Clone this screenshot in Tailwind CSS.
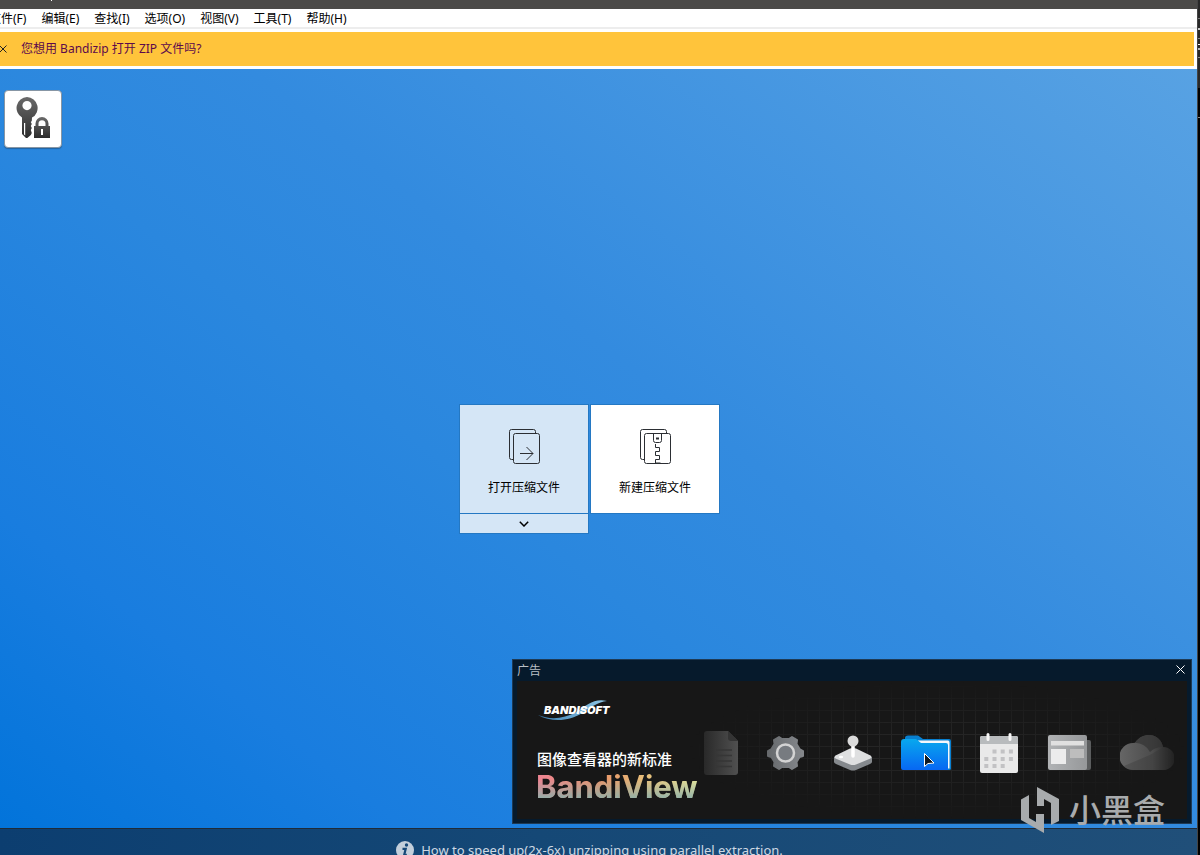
<!DOCTYPE html>
<html lang="zh-CN">
<head>
<meta charset="utf-8">
<title>Bandizip</title>
<script src="https://cdn.jsdelivr.net/npm/@tailwindcss/browser@4"></script>
</head>
<body class="flex h-screen overflow-hidden bg-[#0c0c0c] font-['Noto_Sans','Noto_Sans_CJK_SC',sans-serif] text-[12px] text-black">
<div class="relative flex min-w-0 flex-1 flex-col bg-white">
  <!-- Title bar -->
  <header class="h-[9px] shrink-0 bg-[#4b4a48]"><div class="ml-[51px] h-px w-px bg-white"></div></header>

  <!-- Menu -->
  <nav class="flex h-[18px] shrink-0 items-center gap-[15px] pt-[2px] whitespace-nowrap">
    <button class="-ml-[11px] shrink-0 leading-[20px]">文件(F)</button>
    <button class="leading-[20px]">编辑(E)</button>
    <button class="leading-[20px]">查找(I)</button>
    <button class="leading-[20px]">选项(O)</button>
    <button class="leading-[20px]">视图(V)</button>
    <button class="leading-[20px]">工具(T)</button>
    <button class="leading-[20px]">帮助(H)</button>
  </nav>

  <!-- Notification -->
  <div class="shrink-0 border-t-2 border-[#ededed] pt-[3px] pr-[3px] pb-[3px]">
    <div class="flex h-[34px] items-center gap-[14px] bg-[#ffc43b]">
      <button aria-label="关闭" class="-ml-px"><svg class="block" width="8" height="8" viewBox="0 0 8 8" stroke="#222" fill="none"><path d="M0.5 0.5l7 7M7.5 0.5l-7 7"/></svg></button>
      <a href="#" class="leading-[20px] text-[#5c0a4c]">您想用 Bandizip 打开 ZIP 文件吗?</a>
    </div>
  </div>

  <div class="flex min-h-0 flex-1 flex-col bg-[linear-gradient(38deg,#0073da,#197ddf_20%,#2a87de_43%,#338bdf_57%,#58a2e3)]">
    <main class="grid min-h-0 flex-1">
      <button aria-label="密码管理器" class="col-start-1 row-start-1 mt-[21px] ml-1 flex size-[58px] items-center justify-center self-start rounded-[4px] border border-[#8796a5] bg-white pb-[2px] shadow-[0_1px_1px_#2263a0]">
        <svg class="block" width="36" height="42" viewBox="0 0 36 42">
          <defs><linearGradient id="key" x1="0" y1="0" x2="0" y2="1"><stop stop-color="#6a6a6a"/><stop offset="1" stop-color="#2c2c2c"/></linearGradient></defs>
          <path fill="url(#key)" fill-rule="evenodd" d="M12 0a11 11 0 0 1 5 20.600l-.2 3.400-1 1 1 2-1 2 1 2-1 2 1 3-1 2-3.500 3h-1.300l-4-4V20.500A11 11 0 0 1 12 0zm0 4a4.600 4.600 0 1 0 0 9.200A4.600 4.600 0 0 0 12 4zM9 26v11.500l1.200 1V26z"/>
          <path fill="url(#key)" fill-rule="evenodd" d="M19 29h1.500v-2.500a6.500 6.500 0 0 1 13 0V29H35v12H19zm4.500 0h7v-2.200a3.500 3.500 0 0 0-7 0zM26 32v6h2v-6z"/>
        </svg>
      </button>

      <!-- Start tiles -->
      <div class="col-start-1 row-start-1 flex items-start gap-px self-center justify-self-center pt-[41px] pr-[18px]">
        <div class="flex w-[130px] flex-col">
          <button class="flex h-[110px] flex-col items-center border border-[#2478c3] bg-[#d5e6f6] pt-6">
            <svg class="block" width="32" height="35" viewBox="-1 0 32 35" fill="none" stroke="#2b2e33"><path d="M4.500 30.500h-2a2 2 0 0 1-2-2v-26a2 2 0 0 1 2-2h22a2 2 0 0 1 2 2v2"/><rect x="4.500" y="4.500" width="26" height="30" rx="2"/><path d="M11 24.500h13M17.500 18l6.500 6.500-6.500 6.500"/></svg>
            <span class="mt-[15px] leading-[18px]">打开压缩文件</span>
          </button>
          <button aria-label="更多" class="-mt-px flex h-[21px] items-center justify-center border border-[#2478c3] bg-[#d5e6f6]"><svg class="block" width="10" height="6" viewBox="0 0 10 6" fill="none" stroke="#000" stroke-width="1.500"><path d="M.8.8L5 5 9.200.8"/></svg></button>
        </div>
        <button class="flex h-[110px] w-[130px] flex-col items-center border border-[#2478c3] bg-white pt-6">
          <svg class="block" width="32" height="35" viewBox="-1 0 32 35" fill="none" stroke="#2b2e33"><path d="M4.500 30.500h-2a2 2 0 0 1-2-2v-26a2 2 0 0 1 2-2h22a2 2 0 0 1 2 2v2"/><rect x="4.500" y="4.500" width="26" height="30" rx="2"/><path d="M13.500 5v6.500a2 2 0 0 0 2 2h4a2 2 0 0 0 2-2V5"/><path d="M16 9.500h3" stroke-width="2"/><path d="M15.500 15v3.500h4v4h-4v4h4v4h-4v3.500h5"/></svg>
          <span class="mt-[15px] leading-[18px]">新建压缩文件</span>
        </button>
      </div>

      <!-- Advertisement panel -->
      <section class="col-start-1 row-start-1 mr-[5px] mb-1 flex h-[165px] w-[680px] flex-col self-end justify-self-end border border-[#1e3a55] bg-[#061a2c] px-1 pb-1">
        <div class="flex h-[21px] shrink-0 items-center justify-between pr-[2px]">
          <span class="leading-[18px] text-[#b9bfc5]">广告</span>
          <button aria-label="关闭广告" class="pb-[2px]"><svg class="block" width="9" height="9" viewBox="0 0 9 9" stroke="#fff" fill="none"><path d="M.5.5l8 8M8.500.5l-8 8"/></svg></button>
        </div>
        <div class="relative flex min-h-0 flex-1 bg-[#171717]">
          <div class="absolute inset-y-0 right-0 w-[500px] bg-[repeating-linear-gradient(90deg,#2a2a2a_0_1px,transparent_1px_12px),repeating-linear-gradient(0deg,#2a2a2a_0_1px,transparent_1px_12px)] mask-[radial-gradient(ellipse_at_center,#000b_20%,transparent_70%)]"></div>
          <div class="relative flex w-[187px] shrink-0 flex-col items-start pl-5 whitespace-nowrap text-white">
            <svg class="mt-[18px] block overflow-visible" width="78" height="22" viewBox="0 0 78 22">
              <defs><linearGradient id="swoosh"><stop stop-color="#3b80b5"/><stop offset="1" stop-color="#8fc7e6"/></linearGradient></defs>
              <path fill="url(#swoosh)" d="M1 16c12 5 26 4 38-3C50 6 57-1 70 2 61 3 54 8 45 14 32 23 13 23 1 16z"/>
              <text x="7" y="15" fill="#fff" font-family="Inter, sans-serif" font-size="11" font-style="italic" font-weight="900">BANDISOFT</text>
            </svg>
            <p class="mt-[28px] text-[15px] leading-[20px] font-medium">图像查看器的新标准</p>
            <h1 class="-ml-px bg-[linear-gradient(180deg,transparent_28%,#8fb0aa_85%),linear-gradient(90deg,#ee8494,#e8956a_40%,#e7bb78_65%,#e4e69c)] bg-clip-text font-['Inter',sans-serif] text-[31px] leading-[36px] font-bold text-transparent">BandiView</h1>
          </div>
          <div class="relative mt-[49px] flex h-[46px] flex-1 items-center justify-between pr-[13px]">
            <svg class="block shrink-0" width="34" height="46" viewBox="0 0 34 46"><defs><linearGradient id="doc"><stop stop-color="#292929"/><stop offset="1" stop-color="#505050"/></linearGradient></defs><path fill="url(#doc)" d="M3 1h21l10 10v31a3 3 0 0 1-3 3H3a3 3 0 0 1-3-3V4a3 3 0 0 1 3-3z"/><path fill="#343434" d="M24 1l10 10h-7a3 3 0 0 1-3-3z"/><path stroke="#363636" stroke-width="1.500" d="M12 20h16M12 25.500h16M12 31h16M12 36.500h16"/></svg>
            <svg class="block shrink-0" width="37" height="36" viewBox="0 0 37 36"><defs><linearGradient id="gear"><stop stop-color="#66696c"/><stop offset="1" stop-color="#85888c"/></linearGradient></defs><path fill="url(#gear)" stroke="url(#gear)" stroke-width="2" stroke-linejoin="round" d="M12 2l3 2h7l3-2 5 3-.5 4 3 5L36 16v5l-3.500 1-3 5 .5 4-5 3-3-2h-7l-3 2-5-3 .5-4-3-5L1 21v-5l3.500-2 3-5L7 5z"/><circle cx="18.500" cy="18" r="8.500" fill="#777b80" stroke="#d3d3d3" stroke-width="2.500"/></svg>
            <svg class="block shrink-0" width="38" height="36" viewBox="0 0 38 36"><path fill="#85898d" d="M0 22h38v5q0 1-2 2l-14 6q-3 1-6 0L2 29q-2-1-2-2z"/><path fill="#dedfe0" d="M16 13.500q3-1 6 0l14.500 7q2 1.300 0 3L22 29.500q-3 1-6 0L1.500 23.500q-2-1.700 0-3z"/><ellipse cx="7" cy="22" rx="2.200" ry="1.200" fill="#fff"/><path stroke="#fff" stroke-width="3.500" stroke-linecap="round" d="M19 8v13"/><circle cx="19" cy="6" r="5.500" fill="#dadada"/></svg>
            <svg class="block shrink-0" width="50" height="36" viewBox="0 0 50 36"><defs><linearGradient id="folder" x1="0" y1="0" x2="0" y2="1"><stop stop-color="#08a8ee"/><stop offset="1" stop-color="#0767f3"/></linearGradient></defs><path fill="#087fcf" d="M4 3q0-2.500 3-2.500h10L22 4h26q2 0 2 2v28q0 1-2 1H4z"/><path fill="#f3f8fc" d="M17 5.500h30q1.500 0 1.500 2v26H20z"/><path fill="url(#folder)" d="M3 4h12l5 4h25q2 0 2 2v25H2q-2 0-2-2V7q0-3 3-3z"/><path fill="#111a24" stroke="#fff" d="M23.500 18.500v13l3.500-3 6-.5z"/></svg>
            <svg class="block shrink-0" width="38" height="42" viewBox="0 0 38 42"><rect y="4" width="38" height="37" rx="2" fill="#e9e9e9"/><path fill="#b8bbbd" d="M2 4h34q2 0 2 2v6H0V6q0-2 2-2z"/><path stroke="#f7f7f7" stroke-width="3" stroke-linecap="round" d="M8 2.500v5M30 2.500v5"/><path stroke="#c2c2c4" stroke-width="4" stroke-dasharray="4 4.200" d="M12.500 19.500h21M4.300 27h29.500M4.300 34h21"/></svg>
            <svg class="block shrink-0" width="43" height="36" viewBox="0 0 43 36"><defs><linearGradient id="news"><stop stop-color="#b1b3b5"/><stop offset="1" stop-color="#96989a"/></linearGradient></defs><path fill="#5b5d5e" d="M34 5h7q2 0 2 2v26q0 2-2 2h-7z"/><rect width="39" height="35" rx="2" fill="url(#news)"/><rect x="3" y="6" width="33" height="4.500" fill="#e0e0e0"/><rect x="3" y="14" width="15" height="15" fill="#ececec"/><rect x="22" y="14" width="14" height="9" fill="#bdbdbd"/></svg>
            <svg class="block shrink-0" width="54" height="36" viewBox="0 0 54 36"><defs><linearGradient id="cloud"><stop stop-color="#666"/><stop offset=".6" stop-color="#4c4c4c"/><stop offset="1" stop-color="#1b1b1b"/></linearGradient></defs><path fill="url(#cloud)" d="M13 35a13.500 13.500 0 0 1 0-27l2-.2C19 2 24 0 29 0c8 0 13 6 14 12a11.500 11.500 0 0 1 0 23z"/><path fill="#333" fill-opacity=".7" d="M15 7.800C19 2 24 0 29 0c8 0 13 6 14 12q-8 0-13 5Q25 8 15 7.800z"/><path fill="#333" fill-opacity=".3" d="M4 31l26-11 14-8a11.500 11.500 0 0 1-1 23H13q-6 0-9-4z"/></svg>
          </div>
        </div>
      </section>
    </main>

    <!-- Status bar -->
    <footer class="flex h-[27px] shrink-0 items-start justify-center border-t border-[#1f2b38] bg-[linear-gradient(90deg,#0c3e70,#154876_45%,#204f79)] pr-[18px]">
      <a href="#" class="flex items-center gap-[7px] pt-3 text-[13px] leading-[18px] whitespace-nowrap text-[#ced9e3]">
        <svg class="block" width="18" height="18" viewBox="0 0 18 18"><circle cx="9" cy="9" r="9" fill="#c3cfdb"/><circle cx="10.500" cy="4" r="1.700" fill="#164877"/><path fill="none" stroke="#164877" stroke-width="2.200" d="M6.500 7.800h3.200l-1.500 6h2.600"/></svg>
        <span>How to speed up(2x-6x) unzipping using parallel extraction.</span>
      </a>
    </footer>
  </div>

  <!-- Floating watermark -->
  <div class="absolute right-[32px] bottom-[22px] flex items-center gap-[9px] text-[#a8abad]">
    <svg class="block" width="39" height="46" viewBox="0 0 39 46" fill="currentColor"><path d="M0 12.500L8 8v23l7 4v-8h8v19L0 33zM16 0l22 12v22l-8 4V16l-7-4v7h-7z"/></svg>
    <span class="pb-1 font-['Noto_Sans_CJK_SC',sans-serif] text-[32px] leading-[42px] font-medium">小黑盒</span>
  </div>
</div>

<!-- Edge of the window behind -->
<aside class="flex w-[3px] shrink-0 flex-col border-l border-[#444] bg-black">
  <div class="h-[88px] bg-[#282828] pt-[18px]"><div class="h-px bg-[#777]"></div><div class="mt-[9px] h-[2px] bg-[#ccc]"></div><div class="mt-[8px] h-px bg-[#888]"></div><div class="mt-[5px] h-px bg-white"></div><div class="mt-[3px] h-[2px] bg-[#bbb]"></div><div class="mt-[7px] h-px bg-[#888]"></div></div>
  <div class="mt-[29px] h-px bg-[#888]"></div>
</aside>
</body>
</html>
